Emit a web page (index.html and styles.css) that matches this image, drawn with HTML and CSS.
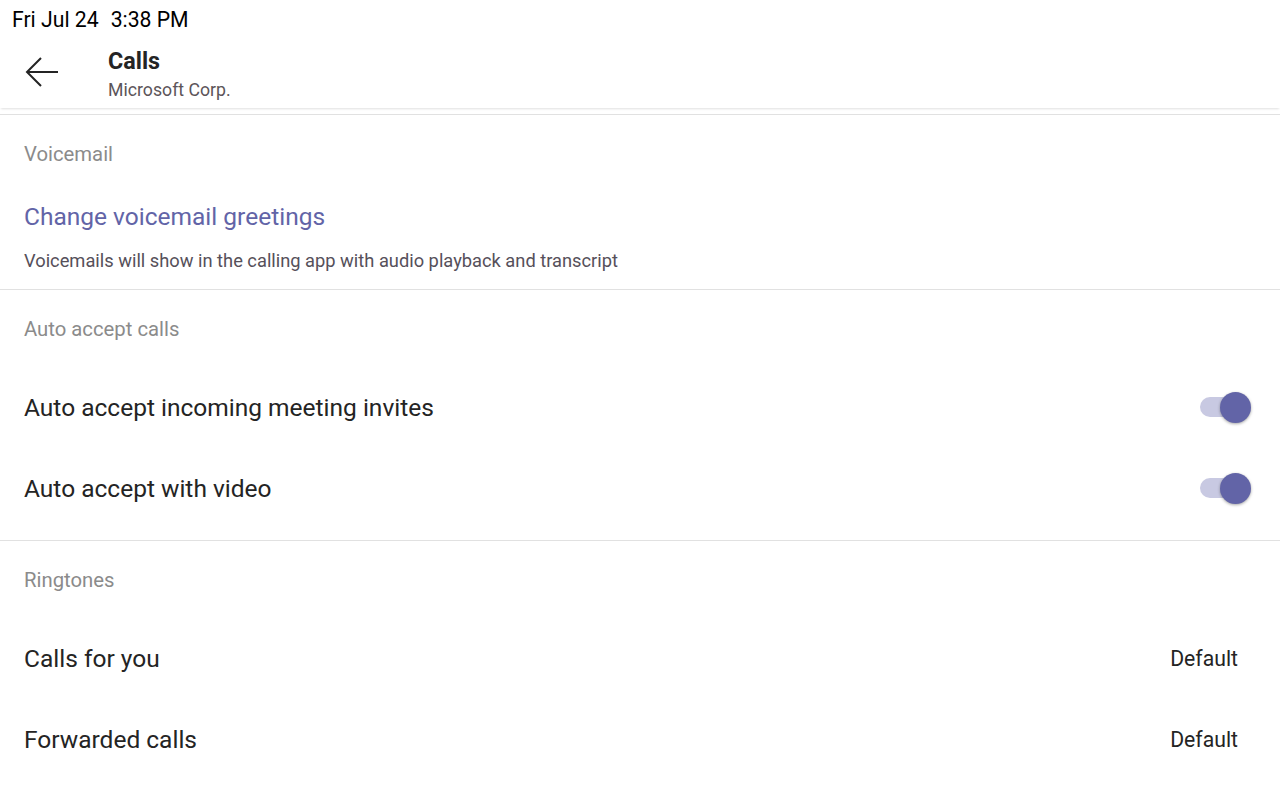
FILE: index.html
```html
<!DOCTYPE html>
<html>
<head>
<meta charset="utf-8">
<link rel="stylesheet" href="styles.css">
</head>
<body>
<div class="status"><span>Fri Jul 24</span><span class="time">3:38 PM</span></div>
<header class="header">
  <div class="back">
    <svg width="34" height="30" viewBox="0 0 34 30"><path d="M33 15H2M16 1L2 15L16 29" fill="none" stroke="#242424" stroke-width="2"/></svg>
  </div>
  <div class="titles">
    <div class="title">Calls</div>
    <div class="subtitle">Microsoft Corp.</div>
  </div>
</header>
<main>
  <section class="section s1">
    <div class="label">Voicemail</div>
    <div class="link">Change voicemail greetings</div>
    <div class="desc">Voicemails will show in the calling app with audio playback and transcript</div>
  </section>
  <section class="section s2">
    <div class="label">Auto accept calls</div>
    <div class="row"><span>Auto accept incoming meeting invites</span><span class="toggle"><span class="knob"></span></span></div>
    <div class="row"><span>Auto accept with video</span><span class="toggle"><span class="knob"></span></span></div>
  </section>
  <section class="section s3">
    <div class="label">Ringtones</div>
    <div class="row"><span>Calls for you</span><span class="value">Default</span></div>
    <div class="row"><span>Forwarded calls</span><span class="value">Default</span></div>
  </section>
</main>
</body>
</html>
```

FILE: styles.css
```css
* { box-sizing: border-box; }
html, body { margin: 0; padding: 0; background: #fff; }
body { font-family: Roboto, "Noto Sans", sans-serif; color: #242424; width: 1280px; height: 800px; overflow: hidden; }
.status { height: 40px; line-height: 40px; padding-left: 12px; font-size: 21.2px; color: #000; display: flex; }
.status .time { margin-left: 12px; }
.header { height: 68px; display: flex; align-items: center; box-shadow: 0 2px 2px -1px rgba(0,0,0,0.12); position: relative; }
.back { width: 108px; padding-left: 25px; display: flex; align-items: center; height: 100%; }
.back svg { display: block; margin-top: -4px; }
.titles { display: flex; flex-direction: column; margin-top: 2px; }
.title { font-size: 23.3px; font-weight: 700; line-height: 28px; color: #242424; margin-top: -2px; }
.subtitle { font-size: 17.7px; line-height: 24px; color: #5c5559; margin-top: 3px; }
main { margin-top: 6px; border-top: 1px solid #e1e1e1; }
.section { border-bottom: 1px solid #e1e1e1; padding: 0 24px; }
.label { height: 78px; line-height: 78px; font-size: 20.3px; color: #8b8b8b; }
.link { height: 48px; line-height: 48px; font-size: 24.5px; color: #6264a7; }
.desc { height: 40px; line-height: 40px; font-size: 18.3px; color: #56505a; margin-bottom: 8px; }
.s2 { padding-bottom: 10px; }
.row { height: 81px; display: flex; align-items: center; justify-content: space-between; font-size: 24.5px; color: #242424; padding-bottom: 3px; }
.s3 { border-bottom: none; }
.value { font-size: 21.2px; color: #242424; margin-right: 18px; }
.toggle { width: 42px; height: 20px; border-radius: 10px; background: #c8c9e2; position: relative; margin-right: 14px; }
.knob { position: absolute; right: -9px; top: -5.5px; width: 31px; height: 31px; border-radius: 50%; background: #6264a7; box-shadow: 0 1px 3px rgba(0,0,0,0.35); }
```
